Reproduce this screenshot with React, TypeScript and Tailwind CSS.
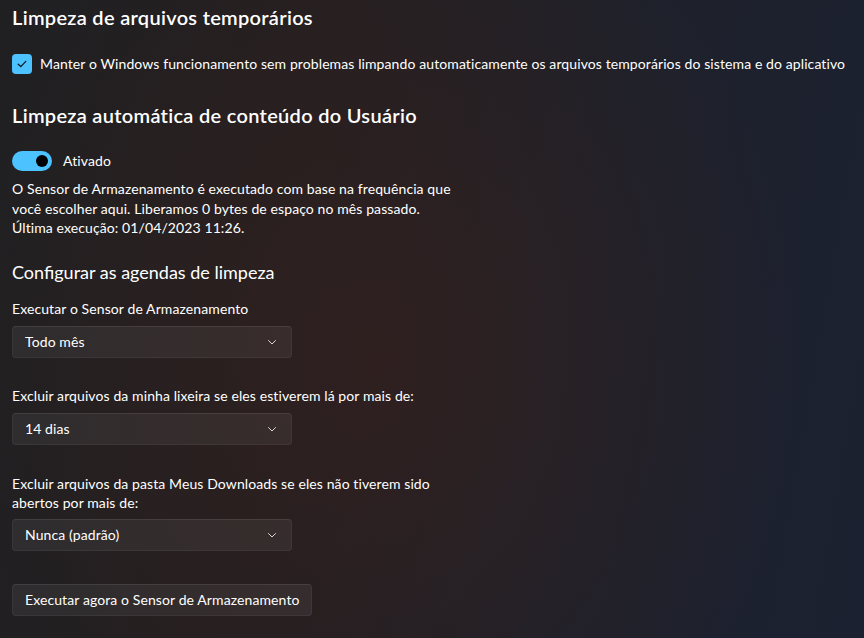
import React from "react";

function Chevron() {
  return (
    <svg width="10" height="10" viewBox="0 0 10 10" fill="none">
      <path d="M1.5 3.5 L5 7 L8.5 3.5" stroke="#d6d6d6" strokeWidth="1" strokeLinecap="round" strokeLinejoin="round" />
    </svg>
  );
}

function Select({ value }: { value: string }) {
  return (
    <div className="flex h-[32px] w-[280px] items-center justify-between rounded-[4px] border border-white/[0.05] border-t-white/[0.09] bg-white/[0.06] pl-[12px] pr-[14px] text-[14px] tracking-[0.1px] text-white">
      <span>{value}</span>
      <Chevron />
    </div>
  );
}

export default function App() {
  return (
    <div
      className="relative h-[638px] w-[864px] overflow-hidden text-white"
      style={{ fontFamily: "Lato, 'Liberation Sans', sans-serif" }}
    >
      <div className="absolute inset-0 bg-[linear-gradient(100deg,#202022_0%,#231f21_35%,#1e212b_65%,#1c2131_100%)]" />
      <div className="absolute inset-0 bg-[radial-gradient(ellipse_420px_520px_at_380px_360px,rgba(52,32,30,0.75),transparent)]" />
      <div className="relative flex flex-col px-[12px] text-[14px] tracking-[0.1px]">
        <h1 className="mt-[3px] h-[28px] text-[20px] font-semibold leading-[28px] tracking-[0.3px]">
          Limpeza de arquivos temporários
        </h1>
        <div className="mt-[23px] flex items-center gap-[8px]">
          <div className="flex h-[20px] w-[20px] items-center justify-center rounded-[4px] bg-[#4cc2ff]">
            <svg width="12" height="12" viewBox="0 0 12 12" fill="none">
              <path d="M2.2 6.2 L4.8 8.6 L9.8 3.4" stroke="#0b1a26" strokeWidth="1.3" strokeLinecap="round" strokeLinejoin="round" />
            </svg>
          </div>
          <span className="leading-[20px]">
            Manter o Windows funcionamento sem problemas limpando automaticamente os arquivos temporários do sistema e do aplicativo
          </span>
        </div>
        <h2 className="mt-[27px] h-[28px] text-[20px] font-semibold leading-[28px] tracking-[0.3px]">
          Limpeza automática de conteúdo do Usuário
        </h2>
        <div className="mt-[22px] flex items-center gap-[11px]">
          <div className="flex h-[20px] w-[40px] items-center justify-end rounded-full bg-[#4cc2ff] pr-[4px]">
            <div className="h-[12px] w-[12px] rounded-full bg-black" />
          </div>
          <span className="leading-[20px]">Ativado</span>
        </div>
        <p className="mt-[8px] leading-[19.5px]">
          O Sensor de Armazenamento é executado com base na frequência que
          <br />
          você escolher aqui. Liberamos 0 bytes de espaço no mês passado.
          <br />
          Última execução: 01/04/2023 11:26.
        </p>
        <h3 className="mt-[21px] text-[18px] font-normal leading-[26px] tracking-normal">
          Configurar as agendas de limpeza
        </h3>
        <div className="mt-[14px] leading-[20px]">Executar o Sensor de Armazenamento</div>
        <div className="mt-[7px]">
          <Select value="Todo mês" />
        </div>
        <div className="mt-[28px] leading-[20px]">
          Excluir arquivos da minha lixeira se eles estiverem lá por mais de:
        </div>
        <div className="mt-[7px]">
          <Select value="14 dias" />
        </div>
        <div className="mt-[29px] leading-[19px]">
          Excluir arquivos da pasta Meus Downloads se eles não tiverem sido
          <br />
          abertos por mais de:
        </div>
        <div className="mt-[7px]">
          <Select value="Nunca (padrão)" />
        </div>
        <div className="mt-[33px]">
          <div className="flex h-[32px] w-[300px] items-center rounded-[4px] border border-white/[0.05] border-t-white/[0.09] bg-white/[0.06] pl-[12px] text-white">
            Executar agora o Sensor de Armazenamento
          </div>
        </div>
      </div>
    </div>
  );
}
